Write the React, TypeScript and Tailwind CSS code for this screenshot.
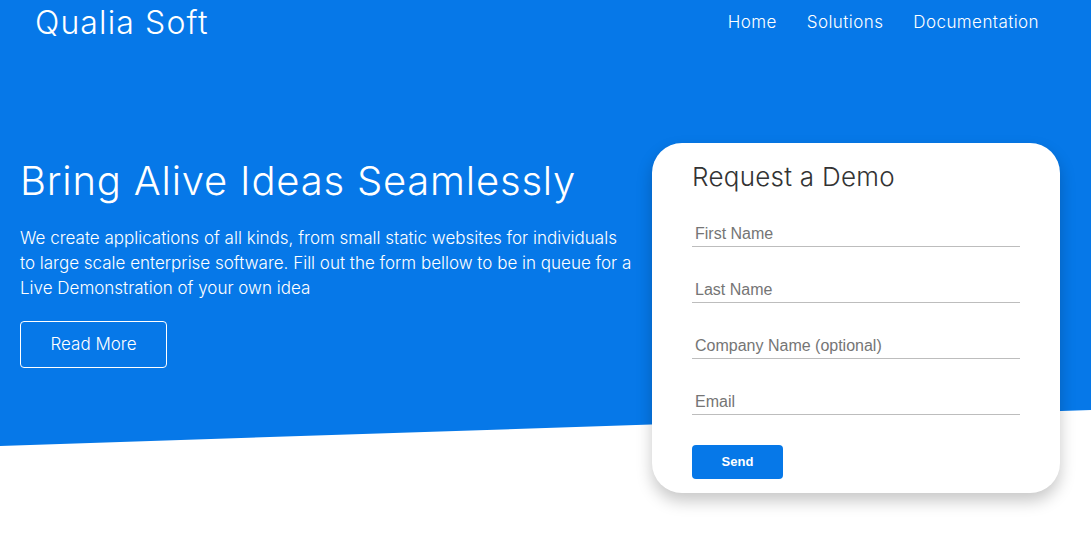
import React from 'react'

const navLinks = ['Home', 'Solutions', 'Documentation']
const fields = ['First Name', 'Last Name', 'Company Name (optional)', 'Email']

const App = () => {
  return (
    <div className="relative w-full min-h-[545px] bg-white overflow-hidden font-['Inter',sans-serif] font-light">
      {/* slanted blue backdrop */}
      <div className="absolute inset-x-0 top-0 h-[446px] bg-[#0678e8] [clip-path:polygon(0_0,100%_0,100%_410px,0_446px)]" />

      <div className="relative">
        <header className="h-[46px] flex items-center justify-between pl-[35px] pr-[52px] text-white">
          <h1 className="text-[32px] leading-none tracking-[0.035em]">Qualia Soft</h1>
          <nav className="flex items-center gap-[30px] text-[17px]">
            {navLinks.map((l) => (
              <a key={l} href="#" className="tracking-[0.025em]">{l}</a>
            ))}
          </nav>
        </header>

        <main className="mt-[97px] flex items-start justify-between pl-[20px] pr-[31px]">
          <section className="pt-[14px] text-white">
            <h2 className="text-[40px] leading-[48px] tracking-[0.02em]">Bring Alive Ideas Seamlessly</h2>
            <p className="mt-[21px] text-[17px] leading-[25px]">
              We create applications of all kinds, from small static websites for individuals<br />
              to large scale enterprise software. Fill out the form bellow to be in queue for a<br />
              Live Demonstration of your own idea
            </p>
            <button className="mt-[20px] w-[147px] h-[47px] rounded-[4px] border border-white text-[17px]">
              Read More
            </button>
          </section>

          <form className="w-[408px] h-[350px] bg-white rounded-[30px] shadow-[0_8px_16px_rgba(0,0,0,0.22)] pt-[18px] px-[40px]">
            <h3 className="text-[26px] leading-[31px] text-[#333] tracking-[0.01em]">Request a Demo</h3>
            <div className="mt-[23px] flex flex-col gap-[24px]">
              {fields.map((f) => (
                <input
                  key={f}
                  placeholder={f}
                  className="h-[32px] pt-[6px] px-[3px] border-b border-[#bdbdbd] outline-none font-['Liberation_Sans',sans-serif] font-normal text-[16px] text-[#333] placeholder:text-[#757575]"
                />
              ))}
            </div>
            <button
              type="button"
              className="mt-[30px] w-[91px] h-[34px] rounded-[4px] bg-[#0678e8] text-white text-[13px] font-bold font-['Liberation_Sans',sans-serif]"
            >
              Send
            </button>
          </form>
        </main>
      </div>
    </div>
  )
}

export default App
